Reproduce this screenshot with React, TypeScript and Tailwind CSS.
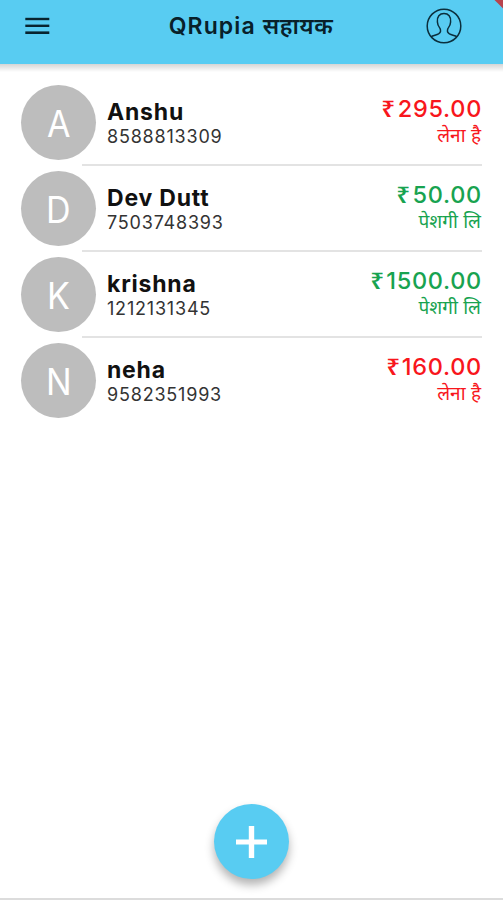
interface Contact {
  name: string;
  phone: string;
  amount: string;
  status: string;
  due: boolean;
}

const contacts: Contact[] = [
  { name: "Anshu", phone: "8588813309", amount: "295.00", status: "लेना है", due: true },
  { name: "Dev Dutt", phone: "7503748393", amount: "50.00", status: "पेशगी लि", due: false },
  { name: "krishna", phone: "1212131345", amount: "1500.00", status: "पेशगी लि", due: false },
  { name: "neha", phone: "9582351993", amount: "160.00", status: "लेना है", due: true },
];

function MenuIcon() {
  return (
    <svg width="25" height="18" viewBox="0 0 25 18" fill="#08242f">
      <rect x="0.3" y="0.8" width="24" height="2.4" />
      <rect x="0.3" y="7.6" width="24" height="2.4" />
      <rect x="0.3" y="14.4" width="24" height="2.6" />
    </svg>
  );
}

function ProfileIcon() {
  return (
    <svg
      width="36"
      height="36"
      viewBox="0 0 36 36"
      fill="none"
      stroke="#0b2f3d"
      strokeWidth="1.5"
      strokeLinejoin="round"
    >
      <circle cx="18" cy="18" r="16.8" />
      <path d="M5 28.8C7 27.4 10.2 27.2 12.6 25.9C14.8 24.7 14.8 22.4 14.1 20.6C12.7 18.8 11.4 16.6 11.4 14C10.8 8.6 13.6 5.6 18 5.6C22.4 5.6 25.2 8.6 24.6 14C24.6 16.6 23.3 18.8 21.9 20.6C21.2 22.4 21.2 24.7 23.4 25.9C25.8 27.2 29 27.4 31 28.8" />
    </svg>
  );
}

function Header() {
  return (
    <header className="relative flex h-16 shrink-0 items-start justify-between overflow-hidden bg-[#58ccf2] pr-[41px] pl-[25px]">
      <button className="mt-[17px] w-[51px]" aria-label="Menu">
        <MenuIcon />
      </button>
      <h1 className="mt-[10px] text-[23px] leading-8 font-semibold tracking-[1.1px] whitespace-nowrap text-[#08202a]">
        QRupia <span className="tracking-[0.6px]">सहायक</span>
      </h1>
      <button className="mt-2" aria-label="Profile">
        <ProfileIcon />
      </button>
      <div className="absolute -top-[9px] -right-[7px] h-3 w-5 rotate-45 bg-[#b8444e]" />
    </header>
  );
}

function ContactRow({ contact, last }: { contact: Contact; last: boolean }) {
  const color = contact.due ? "text-[#f8161c]" : "text-[#18a350]";

  return (
    <li>
      <div className="flex h-[84px] items-center pr-[22px] pl-[21px]">
        <div className="flex size-[75px] shrink-0 items-center justify-center rounded-full bg-[#bdbdbd] pt-0.5 text-[37px] leading-none text-white">
          <span className="scale-x-[0.92]">{contact.name[0].toUpperCase()}</span>
        </div>
        <div className="ml-[11px] flex-1 pt-px">
          <p className="text-[23px] leading-7 font-bold tracking-[0.8px] text-[#111]">
            {contact.name}
          </p>
          <p className="text-[18px] leading-[22px] tracking-[0.8px] text-[#333]">
            {contact.phone}
          </p>
        </div>
        <div className={`text-right ${color}`}>
          <p className="-mr-px text-[23.5px] leading-7 font-medium tracking-[0.7px]">
            <span className="mr-[2px] inline-block scale-x-110 font-['Noto_Sans',sans-serif] text-[22px] leading-none font-semibold">
              ₹
            </span>
            {contact.amount}
          </p>
          <p className="text-[19px] leading-[26px]">{contact.status}</p>
        </div>
      </div>
      <div className={last ? "h-0.5" : "mr-[21px] ml-[82px] h-0.5 bg-[#e3e3e3]"} />
    </li>
  );
}

export default function App() {
  return (
    <div className="flex h-[900px] w-[503px] flex-col overflow-hidden bg-white font-['Inter','Noto_Sans',sans-serif]">
      <Header />
      <div className="h-2 shrink-0 bg-linear-to-b from-[#d5d5d5] to-white" />
      <ul className="mt-[8px] flex-1">
        {contacts.map((contact, i) => (
          <ContactRow key={contact.name} contact={contact} last={i === contacts.length - 1} />
        ))}
      </ul>
      <div className="flex h-[96px] shrink-0 items-start justify-center border-b-2 border-[#dcdcdc]">
        <button
          className="flex size-[75px] items-center justify-center rounded-full bg-[#58ccf2] shadow-[0_6px_10px_rgba(0,0,0,0.3)]"
          aria-label="Add"
        >
          <svg width="31" height="32" viewBox="0 0 31 32" fill="white">
            <path d="M12.8 0h5.4v13.4H31v5H18.2V32h-5.4V18.4H0v-5h12.8z" />
          </svg>
        </button>
      </div>
    </div>
  );
}
